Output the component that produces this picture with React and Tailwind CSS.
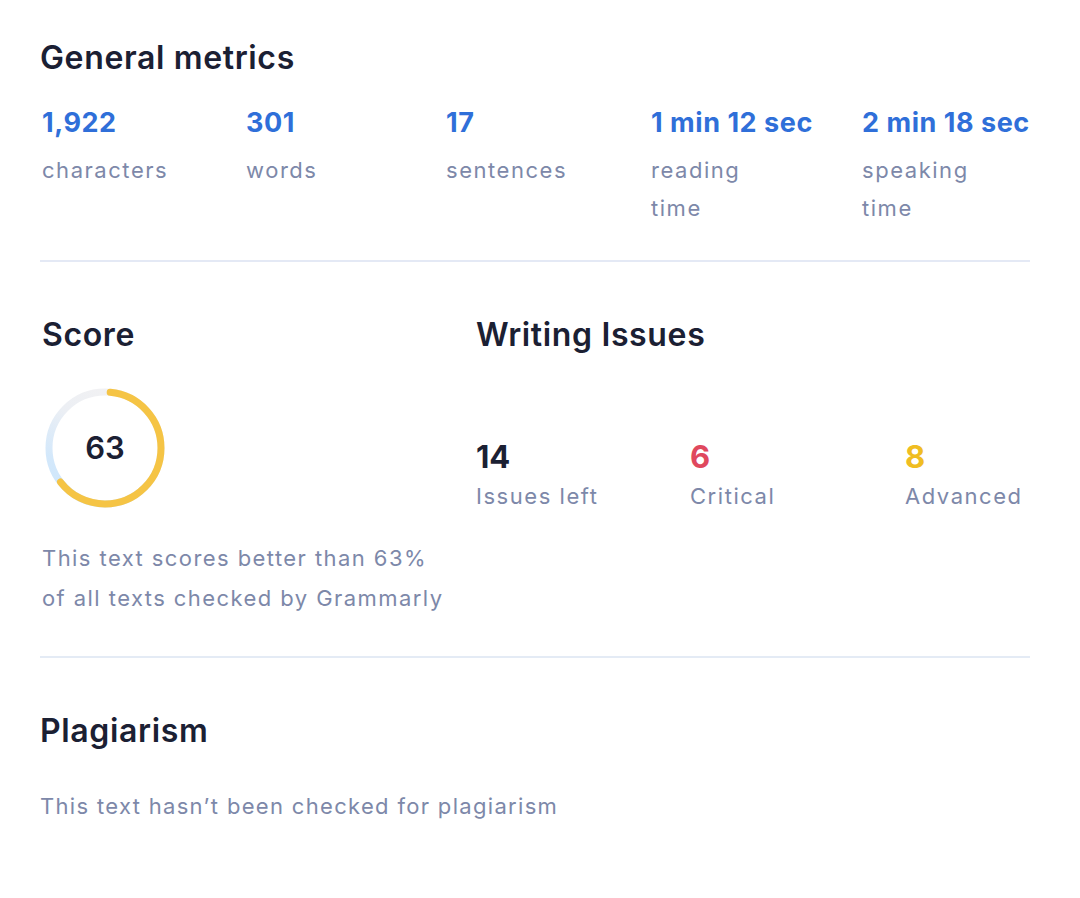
const metrics = [
  { value: '1,922', label: ['characters'], w: 'w-[204px]' },
  { value: '301', label: ['words'], w: 'w-[200px]' },
  { value: '17', label: ['sentences'], w: 'w-[205px]' },
  { value: '1 min 12 sec', label: ['reading', 'time'], w: 'w-[211px]' },
  { value: '2 min 18 sec', label: ['speaking', 'time'], w: '' },
];

const issues = [
  { value: '14', label: 'Issues left', color: 'text-[#1b2033]', w: 'w-[214px]' },
  { value: '6', label: 'Critical', color: 'text-[#e0485e]', w: 'w-[215px]' },
  { value: '8', label: 'Advanced', color: 'text-[#f0bd22]', w: '' },
];

const ScoreRing = ({ score }) => {
  const r = 56;
  const c = 2 * Math.PI * r;
  return (
    <div className="relative size-[120px]">
      {/* rotated -90deg, so local right = screen top, local top = screen left */}
      <svg width="120" height="120" viewBox="0 0 120 120" className="-rotate-90">
        <defs>
          <linearGradient id="track" x1="1" y1="0.5" x2="0.2" y2="0">
            <stop offset="0%" stopColor="#f1f1f3" />
            <stop offset="35%" stopColor="#eceff4" />
            <stop offset="80%" stopColor="#d3e8fb" />
            <stop offset="100%" stopColor="#d0e7fb" />
          </linearGradient>
        </defs>
        <circle cx="60" cy="60" r={r} fill="none" stroke="url(#track)" strokeWidth="7" />
        <circle
          cx="60"
          cy="60"
          r={r}
          fill="none"
          stroke="#f5c445"
          strokeWidth="7"
          strokeLinecap="round"
          strokeDasharray={`${(c * score) / 100} ${c}`}
          strokeDashoffset={-c * 0.015}
        />
      </svg>
      <span className="absolute inset-0 flex items-center justify-center text-[31px] font-semibold text-[#1b2033]">
        {score}
      </span>
    </div>
  );
};

export default function App() {
  return (
    <div className="w-[1080px] h-[898px] bg-white font-['Inter',sans-serif] pl-[40px] pr-[50px] pt-[40px]">
      <h2 className="text-[32px] leading-[36px] font-semibold tracking-[0.02em] text-[#1b2033]">General metrics</h2>
      <div className="flex mt-[31px] pl-[2px]">
        {metrics.map((m) => (
          <div key={m.value} className={`${m.w} shrink-0`}>
            <p className="whitespace-nowrap text-[27px] leading-[32px] font-bold tracking-[0.02em] text-[#2f6fd9]">{m.value}</p>
            <p className="mt-[12px] text-[22px] leading-[38px] tracking-[0.07em] text-[#7d88a9]">
              {m.label.map((l) => (
                <span key={l} className="block">{l}</span>
              ))}
            </p>
          </div>
        ))}
      </div>
      <div className="mt-[33px] h-[2px] bg-[#e4e9f5]" />

      <div className="flex mt-[55px]">
        <div className="w-[436px] pl-[2px]">
          <h2 className="text-[32px] leading-[36px] font-semibold tracking-[0.02em] text-[#1b2033]">Score</h2>
          <div className="mt-[35px] ml-[3px]">
            <ScoreRing score={63} />
          </div>
          <p className="mt-[30px] text-[22px] leading-[40px] tracking-[0.065em] text-[#7d88a9]">
            This text scores better than 63%
            <br />
            of all texts checked by Grammarly
          </p>
        </div>
        <div>
          <h2 className="text-[32px] leading-[36px] font-semibold tracking-[0.02em] text-[#1b2033]">Writing Issues</h2>
          <div className="flex mt-[87px]">
            {issues.map((i) => (
              <div key={i.label} className={i.w}>
                <p className={`text-[31px] leading-[34px] font-bold ${i.color}`}>{i.value}</p>
                <p className="mt-[5px] text-[22px] leading-[34px] tracking-[0.07em] text-[#7d88a9]">{i.label}</p>
              </div>
            ))}
          </div>
        </div>
      </div>
      <div className="mt-[38px] h-[2px] bg-[#e4ebf5]" />

      <h2 className="mt-[55px] text-[32px] leading-[36px] font-semibold tracking-[0.02em] text-[#1b2033]">Plagiarism</h2>
      <p className="mt-[42px] text-[22px] leading-[30px] tracking-[0.06em] text-[#7d88a9]">
        This text hasn’t been checked for plagiarism
      </p>
    </div>
  );
}
